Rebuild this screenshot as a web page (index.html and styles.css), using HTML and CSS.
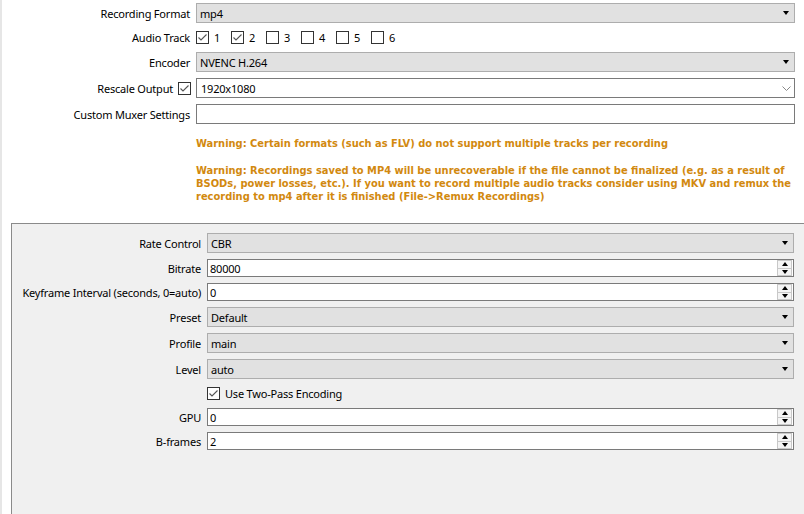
FILE: index.html
```html
<!DOCTYPE html>
<html>
<head>
<meta charset="utf-8">
<link rel="stylesheet" href="styles.css">
</head>
<body>
<div class="page">
  <div class="top">
    <div class="label">Recording Format</div>
    <div class="combo"><span>mp4</span><i class="tri"></i></div>

    <div class="label">Audio Track</div>
    <div class="tracks">
      <label class="cb"><span class="box on"><svg viewBox="0 0 13 13"><path d="M2.5 6.5 L5 9 L10.5 3.5"/></svg></span>1</label>
      <label class="cb"><span class="box on"><svg viewBox="0 0 13 13"><path d="M2.5 6.5 L5 9 L10.5 3.5"/></svg></span>2</label>
      <label class="cb"><span class="box"></span>3</label>
      <label class="cb"><span class="box"></span>4</label>
      <label class="cb"><span class="box"></span>5</label>
      <label class="cb"><span class="box"></span>6</label>
    </div>

    <div class="label">Encoder</div>
    <div class="combo"><span>NVENC H.264</span><i class="tri"></i></div>

    <div class="label">Rescale Output <span class="box on"><svg viewBox="0 0 13 13"><path d="M2.5 6.5 L5 9 L10.5 3.5"/></svg></span></div>
    <div class="ecombo"><span>1920x1080</span><svg class="chev" viewBox="0 0 9 5"><path d="M0.5 0.5 L4.5 4.5 L8.5 0.5"/></svg></div>

    <div class="label">Custom Muxer Settings</div>
    <div class="edit"></div>

    <div></div>
    <div class="warnings">
      <p>Warning: Certain formats (such as FLV) do not support multiple tracks per recording</p>
      <p>Warning: Recordings saved to MP4 will be unrecoverable if the file cannot be finalized (e.g. as a result of BSODs, power losses, etc.). If you want to record multiple audio tracks consider using MKV and remux the recording to mp4 after it is finished (File-&gt;Remux Recordings)</p>
    </div>
  </div>

  <div class="group">
    <div class="label">Rate Control</div>
    <div class="combo"><span>CBR</span><i class="tri"></i></div>

    <div class="label">Bitrate</div>
    <div class="spin"><span>80000</span><span class="btns"><b class="up"></b><b class="dn"></b></span></div>

    <div class="label">Keyframe Interval (seconds, 0=auto)</div>
    <div class="spin"><span>0</span><span class="btns"><b class="up"></b><b class="dn"></b></span></div>

    <div class="label">Preset</div>
    <div class="combo"><span>Default</span><i class="tri"></i></div>

    <div class="label">Profile</div>
    <div class="combo"><span>main</span><i class="tri"></i></div>

    <div class="label">Level</div>
    <div class="combo"><span>auto</span><i class="tri"></i></div>

    <div></div>
    <label class="cb two"><span class="box on"><svg viewBox="0 0 13 13"><path d="M2.5 6.5 L5 9 L10.5 3.5"/></svg></span>Use Two-Pass Encoding</label>

    <div class="label">GPU</div>
    <div class="spin"><span>0</span><span class="btns"><b class="up"></b><b class="dn"></b></span></div>

    <div class="label">B-frames</div>
    <div class="spin"><span>2</span><span class="btns"><b class="up"></b><b class="dn"></b></span></div>
  </div>
</div>
</body>
</html>
```

FILE: styles.css
```css
html, body {
  margin: 0;
  padding: 0;
  background: #ffffff;
  overflow: hidden;
  width: 804px;
  height: 514px;
}
body {
  font-family: "Noto Sans", "Open Sans", sans-serif;
  font-size: 11px;
  letter-spacing: -0.2px;
  color: #000;
}
.page {
  border-left: 2px solid #e6e6e6;
  height: 514px;
  box-sizing: border-box;
  overflow: hidden;
}
.top {
  display: grid;
  grid-template-columns: 188px 599px;
  column-gap: 6px;
  grid-template-rows: 20px 17px 20px 20px 20px auto;
  row-gap: 6px;
  padding-top: 3px;
}
.label {
  display: flex;
  align-items: center;
  justify-content: flex-end;
  white-space: nowrap;
}
.label .box {
  margin-left: 5px;
  margin-right: -1px;
}
.combo, .ecombo, .edit, .spin {
  box-sizing: border-box;
  height: 20px;
  display: flex;
  align-items: center;
  white-space: nowrap;
}
.combo {
  background: #e1e1e1;
  border: 1px solid #adadad;
  padding-left: 3px;
  justify-content: space-between;
}
.tri {
  width: 0;
  height: 0;
  border-left: 3.5px solid transparent;
  border-right: 3.5px solid transparent;
  border-top: 4px solid #000;
  margin-right: 5px;
}
.ecombo {
  background: #fff;
  border: 1px solid #7a7a7a;
  padding-left: 4px;
  justify-content: space-between;
}
.chev {
  width: 9px;
  height: 5px;
  margin-right: 3px;
  fill: none;
  stroke: #888;
  stroke-width: 1;
}
.edit {
  background: #fff;
  border: 1px solid #7a7a7a;
}
.tracks {
  display: flex;
  align-items: center;
  gap: 10px;
}
.cb {
  display: flex;
  align-items: center;
  gap: 5px;
  width: 25px;
}
.box {
  width: 13px;
  height: 13px;
  box-sizing: border-box;
  border: 1px solid #333;
  background: #fff;
  display: inline-block;
  flex: none;
  position: relative;
}
.box svg {
  position: absolute;
  left: -1px;
  top: -1px;
  width: 13px;
  height: 13px;
  fill: none;
  stroke: #555;
  stroke-width: 1.1;
}
.warnings {
  color: #d2890f;
  font-family: "DejaVu Sans Condensed", "DejaVu Sans", sans-serif;
  font-weight: bold;
  font-size: 11px;
  letter-spacing: 0;
  line-height: 13px;
  padding-top: 7px;
}
.warnings p {
  margin: 0 0 14px 0;
}
.group {
  margin-top: 6px;
  margin-left: 9px;
  width: 820px;
  height: 320px;
  background: #f0f0f0;
  border: 1px solid #8a8a8a;
  display: grid;
  grid-template-columns: 189px 587px;
  column-gap: 6px;
  grid-template-rows: 20px 18px 18px 20px 20px 20px 17px 18px 18px;
  row-gap: 6px;
  padding-top: 9px;
  align-content: start;
}
.spin {
  height: 18px;
  background: #fff;
  border: 1px solid #7a7a7a;
  padding-left: 2px;
  justify-content: space-between;
}
.btns {
  display: flex;
  flex-direction: column;
  width: 15px;
  height: 16px;
  margin-right: 1px;
  box-sizing: border-box;
}
.btns b {
  flex: 1;
  border: 1px solid #c8c8c8;
  background: #f4f4f4;
  display: flex;
  align-items: center;
  justify-content: center;
}
.btns b.dn {
  border-top: none;
}
.btns b.up::after {
  content: "";
  border-left: 3.5px solid transparent;
  border-right: 3.5px solid transparent;
  border-bottom: 4px solid #000;
}
.btns b.dn::after {
  content: "";
  border-left: 3.5px solid transparent;
  border-right: 3.5px solid transparent;
  border-top: 4px solid #000;
}
.cb.two {
  width: auto;
  gap: 5px;
}
```
